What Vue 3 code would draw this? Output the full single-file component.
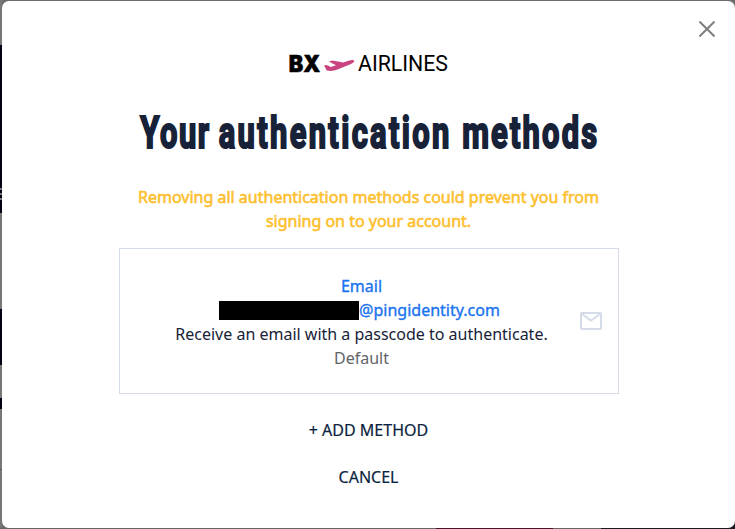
<script setup>
const words = [
  { text: 'Your', x: 1, width: 97 },
  { text: 'authentication', x: 111.5, width: 325 },
  { text: 'methods', x: 454.5, width: 190 },
]
</script>

<template>
  <div class="backdrop">
    <main class="modal">
      <button class="close" aria-label="Close">
        <svg width="16" height="16" viewBox="0 0 16 16"><path d="M.5 .5 15.5 15.5M15.5 .5 .5 15.5" fill="none" stroke="#7f7f7f" stroke-width="2" /></svg>
      </button>
      <svg class="logo" width="160" height="26" viewBox="0 0 160 26">
        <text class="bx" x="-.3" y="21" textLength="31.5" lengthAdjust="spacingAndGlyphs">BX</text>
        <path d="M35 14.4 37.6 14.1 42 16 47 14.2 39.8 10.6 43.4 9.5 54.3 11.4 60.2 9.5C62.8 8.7 65 8.8 65.2 9.8C65.4 11 63.8 12.2 61.3 13.3L48.5 18.6C45 20 41.2 20.2 37.8 19.6Z" fill="#c8437f" />
        <text class="air" x="69" y="20" textLength="90" lengthAdjust="spacingAndGlyphs">AIRLINES</text>
      </svg>
      <h1 class="title">
        <svg width="500" height="60" viewBox="0 0 500 60">
          <g transform="translate(20.5 45) scale(.71 1)">
            <text v-for="w in words" :key="w.text" :x="w.x" y="0" :textLength="w.width" lengthAdjust="spacing">{{ w.text }}</text>
          </g>
        </svg>
      </h1>
      <p class="warning">Removing all authentication methods could prevent you from<br />signing on to your account.</p>
      <section class="card">
        <div class="details">
          <div class="blue">Email</div>
          <div class="blue address"><span class="redacted"></span>@pingidentity.com</div>
          <div>Receive an email with a passcode to authenticate.</div>
          <div class="muted">Default</div>
        </div>
        <svg class="mail" width="22" height="18" viewBox="0 0 22 18"><rect x="1" y="1" width="20" height="16" rx="1" /><path d="m2 2 9 6.6L20 2" /></svg>
      </section>
      <button class="action add">+ ADD METHOD</button>
      <button class="action">CANCEL</button>
    </main>
  </div>
</template>

<style>
body { margin: 0; overflow: hidden; }
</style>

<style scoped>
.backdrop {
  box-sizing: border-box;
  width: 735px;
  height: 529px;
  padding: 1px 0 1px 2px;
  background:
    linear-gradient(90deg, #666 436px, #4c1230 436px 553px, #666 553px 601px, #171822 601px) 0 528px / 735px 1px no-repeat,
    linear-gradient(#171822, #171822) 725px 519px / 10px 10px no-repeat,
    linear-gradient(#777 45px, #020217 45px 188px, #777 188px 190px, #020217 190px 193px, #777 193px 195px, #020217 195px 198px, #777 198px 200px, #020217 200px 213px, #777 213px 309px, #020217 309px 365px, #777 365px 398px, #020217 398px 409px, #777 409px 469px, #555 469px 470px, #777 470px) 0 0 / 2px 529px no-repeat,
    #6c6c6c;
}
.modal {
  position: relative;
  box-sizing: border-box;
  display: flex;
  flex-direction: column;
  align-items: center;
  width: 733px;
  height: 527px;
  padding-top: 50px;
  border-radius: 7px;
  background: #fff;
  color: #172238;
  font: 16px/24px "Noto Sans", sans-serif;
}
button { padding: 0; border: 0; background: none; font: inherit; }
.close { position: absolute; top: 20px; right: 20px; display: flex; }
.logo { display: block; overflow: visible; }
.bx { font: 900 22.5px Inter, sans-serif; fill: #000; stroke: #000; stroke-width: .5px; }
.air { font: 400 21.5px Roboto, sans-serif; fill: #000; }
.title { height: 60px; margin: 26px 0 22px; }
.title svg { display: block; overflow: visible; }
.title text { font: 700 43.5px Roboto, sans-serif; fill: #172238; stroke: #172238; stroke-width: 2.1px; }
.warning { margin: 0; color: #fdc02f; -webkit-text-stroke: .6px #fdc02f; text-align: center; white-space: nowrap; }
.card {
  box-sizing: border-box;
  display: flex;
  align-items: center;
  width: 500px;
  height: 146px;
  margin: 15px 0 24px;
  padding-right: 16px;
  border: 1px solid #d5dae8;
}
.details { flex: 1; padding-left: 24px; padding-top: 1px; text-align: center; white-space: nowrap; }
.blue { color: #1a73ef; -webkit-text-stroke: .35px #1a73ef; }
.address { display: flex; justify-content: center; align-items: center; padding-right: 4px; }
.redacted { width: 140px; height: 19px; margin-top: 1px; background: #000; }
.muted { color: #626466; }
.mail { fill: none; stroke: #d5dce8; stroke-width: 2px; }
.action { height: 24px; color: #0a2340; -webkit-text-stroke: .2px #0a2340; }
.add { margin-bottom: 23px; }
</style>
